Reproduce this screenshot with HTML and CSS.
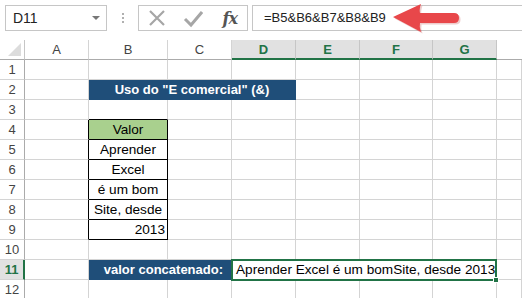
FILE: index.html
```html
<!DOCTYPE html>
<html lang="pt">
<head>
  <meta charset="UTF-8">
  <title>Excel - E comercial</title>
  <link rel="stylesheet" href="styles.css">
</head>
<body>
  <div class="app">
    <div class="toolbar">
      <div class="name-box">
        <span>D11</span>
        <span class="caret"></span>
      </div>
      <div class="grip"><i></i><i></i><i></i></div>
      <div class="fx-buttons">
        <svg class="icon" width="20" height="20" viewBox="0 0 20 20"><path d="M3 3 L17 17 M17 3 L3 17" stroke="#a6a6a6" stroke-width="2.2" fill="none"/></svg>
        <svg class="icon" width="20" height="20" viewBox="0 0 20 20"><path d="M2 11 L8 17 L19 4" stroke="#a6a6a6" stroke-width="3" fill="none"/></svg>
        <span class="fx">fx</span>
      </div>
      <div class="formula">=B5&amp;B6&amp;B7&amp;B8&amp;B9</div>
    </div>

    <div class="sheet">
      <div class="corner"><span class="tri"></span></div>
      <div class="col-head">A</div>
      <div class="col-head">B</div>
      <div class="col-head">C</div>
      <div class="col-head active">D</div>
      <div class="col-head active">E</div>
      <div class="col-head active">F</div>
      <div class="col-head active">G</div>
      <div class="col-head last"></div>

      <!-- row 1 -->
      <div class="row-head">1</div>
      <div class="cell"></div><div class="cell"></div><div class="cell"></div><div class="cell"></div><div class="cell"></div><div class="cell"></div><div class="cell"></div><div class="cell"></div>

      <!-- row 2 -->
      <div class="row-head">2</div>
      <div class="cell"></div>
      <div class="cell banner span3">Uso do "E comercial" (&amp;)</div>
      <div class="cell"></div><div class="cell"></div><div class="cell"></div><div class="cell"></div>

      <!-- row 3 -->
      <div class="row-head">3</div>
      <div class="cell"></div><div class="cell edge-bottom"></div><div class="cell"></div><div class="cell"></div><div class="cell"></div><div class="cell"></div><div class="cell"></div><div class="cell"></div>

      <!-- row 4 -->
      <div class="row-head">4</div>
      <div class="cell edge-right"></div><div class="cell box head">Valor</div><div class="cell"></div><div class="cell"></div><div class="cell"></div><div class="cell"></div><div class="cell"></div><div class="cell"></div>

      <!-- row 5 -->
      <div class="row-head">5</div>
      <div class="cell edge-right"></div><div class="cell box">Aprender</div><div class="cell"></div><div class="cell"></div><div class="cell"></div><div class="cell"></div><div class="cell"></div><div class="cell"></div>

      <!-- row 6 -->
      <div class="row-head">6</div>
      <div class="cell edge-right"></div><div class="cell box">Excel</div><div class="cell"></div><div class="cell"></div><div class="cell"></div><div class="cell"></div><div class="cell"></div><div class="cell"></div>

      <!-- row 7 -->
      <div class="row-head">7</div>
      <div class="cell edge-right"></div><div class="cell box">é um bom</div><div class="cell"></div><div class="cell"></div><div class="cell"></div><div class="cell"></div><div class="cell"></div><div class="cell"></div>

      <!-- row 8 -->
      <div class="row-head">8</div>
      <div class="cell edge-right"></div><div class="cell box">Site, desde</div><div class="cell"></div><div class="cell"></div><div class="cell"></div><div class="cell"></div><div class="cell"></div><div class="cell"></div>

      <!-- row 9 -->
      <div class="row-head">9</div>
      <div class="cell edge-right"></div><div class="cell box num">2013</div><div class="cell"></div><div class="cell"></div><div class="cell"></div><div class="cell"></div><div class="cell"></div><div class="cell"></div>

      <!-- row 10 -->
      <div class="row-head">10</div>
      <div class="cell"></div><div class="cell"></div><div class="cell"></div><div class="cell"></div><div class="cell"></div><div class="cell"></div><div class="cell"></div><div class="cell"></div>

      <!-- row 11 -->
      <div class="row-head active">11</div>
      <div class="cell"></div>
      <div class="cell banner label span2">valor concatenado:</div>
      <div class="cell selected span4">Aprender Excel é um bomSite, desde 2013<span class="handle"></span></div>
      <div class="cell"></div>

      <!-- row 12 -->
      <div class="row-head">12</div>
      <div class="cell"></div><div class="cell"></div><div class="cell"></div><div class="cell"></div><div class="cell"></div><div class="cell"></div><div class="cell"></div><div class="cell"></div>
    </div>

    <!-- callout arrow pointing at the formula -->
    <svg class="arrow" width="80" height="36" viewBox="0 0 80 36">
      <path d="M4 16 L32 3 Q30 9 31 12 L65 12 Q70 12 70 17 Q70 22 65 22 L31 22 Q30 26 32 31 Z" fill="#b33" opacity="0.25" transform="translate(1.5,1.5)"/>
      <path d="M4 16 L32 3 Q30 9 31 12 L65 12 Q70 12 70 17 Q70 22 65 22 L31 22 Q30 26 32 31 Z" fill="#e8474a"/>
    </svg>
  </div>
</body>
</html>
```

FILE: styles.css
```css
* {
  box-sizing: border-box;
}
body {
  margin: 0;
  background: #fff;
  font-family: "Liberation Sans", Arial, sans-serif;
  color: #000;
  overflow: hidden;
}
.app {
  position: relative;
  width: 522px;
  height: 298px;
  overflow: hidden;
}

/* formula bar */
.toolbar {
  display: flex;
  align-items: center;
  height: 40px;
  padding: 5px 0 9px 5px;
}
.name-box {
  width: 102px;
  height: 26px;
  border: 1px solid #c6c6c6;
  display: flex;
  align-items: center;
  justify-content: space-between;
  padding: 0 6px 0 7px;
  font-size: 14px;
  color: #222;
}
.caret {
  width: 0;
  height: 0;
  border-left: 4px solid transparent;
  border-right: 4px solid transparent;
  border-top: 4px solid #777;
}
.grip {
  width: 31px;
  display: flex;
  flex-direction: column;
  align-items: center;
  gap: 2px;
}
.grip i {
  width: 2px;
  height: 2px;
  background: #b0b0b0;
}
.fx-buttons {
  width: 110px;
  height: 26px;
  border: 1px solid #c6c6c6;
  display: flex;
  align-items: center;
  padding: 0 10px 0 8px;
  gap: 16px;
}
.fx {
  margin-left: auto;
  font-family: "DejaVu Serif", "Liberation Serif", serif;
  font-style: italic;
  font-weight: bold;
  font-size: 16px;
  color: #555;
  letter-spacing: -1px;
}
.formula {
  flex: 1;
  height: 26px;
  margin-left: 4px;
  border: 1px solid #c6c6c6;
  border-right: none;
  padding: 0 0 0 11px;
  line-height: 24px;
  font-size: 13px;
  color: #222;
}

/* grid */
.sheet {
  display: grid;
  grid-template-columns: 25px 64px 79px 64px 64px 64px 73px 64px 1fr;
  grid-auto-rows: 20px;
}
.corner {
  position: relative;
  border-right: 1px solid #c6c6c6;
  border-bottom: 1px solid #ababab;
}
.tri {
  position: absolute;
  right: 3px;
  bottom: 3px;
  width: 0;
  height: 0;
  border-left: 13px solid transparent;
  border-bottom: 13px solid #dcdcdc;
}
.col-head {
  border-right: 1px solid #d4d4d4;
  border-bottom: 1px solid #ababab;
  font-size: 13px;
  color: #444;
  text-align: center;
  line-height: 19px;
}
.col-head.active {
  background: #e1e1e1;
  color: #217346;
  font-weight: bold;
  border-right-color: #c6c6c6;
  border-bottom: 2px solid #217346;
}
.col-head.last {
  border-right: none;
}
.row-head {
  border-right: 1px solid #ababab;
  border-bottom: 1px solid #d4d4d4;
  font-size: 13px;
  color: #444;
  text-align: center;
  line-height: 20px;
}
.row-head.active {
  background: #e1e1e1;
  color: #217346;
  font-weight: bold;
  border-right: 2px solid #217346;
}
.cell {
  border-right: 1px solid #d4d4d4;
  border-bottom: 1px solid #d4d4d4;
  font-size: 13.6px;
  line-height: 19px;
  white-space: nowrap;
  overflow: hidden;
}
.span2 { grid-column: span 2; }
.span3 { grid-column: span 3; }
.span4 { grid-column: span 4; }
.banner {
  background: #1f4e79;
  border-color: #1f4e79;
  color: #fff;
  font-size: 13px;
  font-weight: bold;
  text-align: center;
}
.banner.label {
  text-align: right;
  padding-right: 8px;
}
.edge-bottom {
  border-bottom-color: #000;
}
.edge-right {
  border-right-color: #000;
}
.box {
  border-right-color: #000;
  border-bottom-color: #000;
  text-align: center;
}
.box.head {
  background: #a9d08e;
}
.box.num {
  text-align: right;
  padding-right: 2px;
}
.selected {
  position: relative;
  overflow: visible;
  border: 2px solid #217346;
  margin: -1px 0 -1px -1px;
  padding-left: 3px;
  line-height: 18px;
}
.handle {
  position: absolute;
  right: -4px;
  bottom: -4px;
  width: 6px;
  height: 6px;
  background: #217346;
  border: 1px solid #fff;
}

.arrow {
  position: absolute;
  left: 389px;
  top: 1px;
}
```
